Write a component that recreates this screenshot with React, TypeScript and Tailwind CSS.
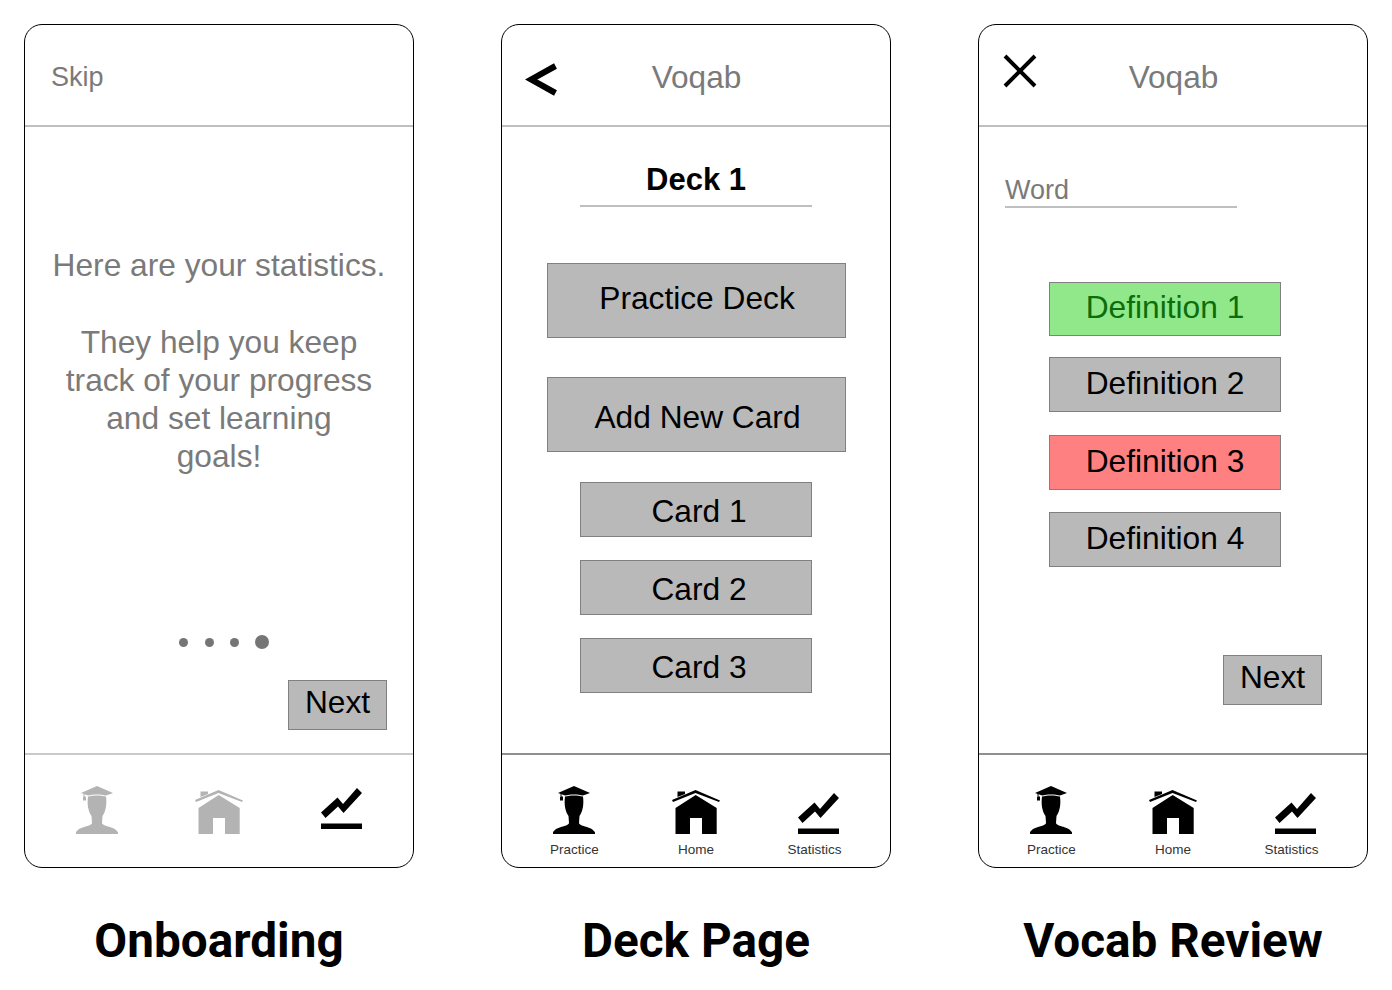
import React from 'react';

const PersonIcon: React.FC = () => (
  <svg width="42" height="48" viewBox="0 0 42 48" fill="currentColor">
    {/* cap */}
    <path d="M21 0 L37 7 L30 9.5 C25 8 17 8 12 9.5 L8.5 8.2 L5 7 Z" />
    <path d="M7.5 8 H8.5 V10.5 H10 V14.5 H7 V11 H7.5 Z" />
    {/* head and shoulders */}
    <path d="M12 10.5 C17 9 25 9 30 10.5 C31 18 30 25 26.5 30 L26 37 C27 41 39 40 42 46.5 L42 48 L0 48 L0 46.5 C3 40 15 41 16 37 L15.5 30 C12 25 11 18 12 10.5 Z" />
  </svg>
);

const HomeIcon: React.FC = () => (
  <svg width="48" height="44" viewBox="0 0 48 44" fill="currentColor">
    <path d="M0 10 L23.5 0 L48 10.5 L47 12 L23.5 3 L1 12 Z" />
    <path d="M5.5 1.5 H13 V4 L5.5 7 Z" />
    <path d="M3.5 18 L23.7 5 L44.7 18 V44 H30 V28 H18 V44 H3.5 Z" />
  </svg>
);

const StatsIcon: React.FC = () => (
  <svg width="41" height="41" viewBox="0 0 41 41" fill="currentColor">
    <path d="M0 24.5 L16.5 9.5 L22 16 L36 0 L41 5 L22.5 25 L17 18.5 L4.5 30 Z" />
    <rect x="0" y="35.5" width="41" height="5.5" />
  </svg>
);

interface BottomBarProps {
  muted?: boolean;
}

const BottomBar: React.FC<BottomBarProps> = ({ muted }) => (
  <div
    className={`h-[114px] border-t-2 grid grid-cols-3 px-[11px] ${
      muted ? 'border-[#c9c9c9]' : 'border-[#8f8f8f]'
    }`}
  >
    <div className={`flex flex-col items-center pt-[31px] ${muted ? 'text-[#b3b3b3]' : 'text-black'}`}>
      <PersonIcon />
      {!muted && <span className="mt-[7px] ml-[1px] text-[13.5px] leading-[17px] text-[#333333]">Practice</span>}
    </div>
    <div className={`flex flex-col items-center pt-[35px] ${muted ? 'text-[#b3b3b3]' : 'text-black'}`}>
      <HomeIcon />
      {!muted && <span className="mt-[7px] text-[13.5px] leading-[17px] text-[#333333]">Home</span>}
    </div>
    {muted ? (
      <div className="flex flex-col items-center pt-[33px] text-black">
        <StatsIcon />
      </div>
    ) : (
      <div className="flex flex-col items-center pt-[38px] text-black">
        <StatsIcon />
        <span className="mt-[7px] -ml-[7px] text-[13.5px] leading-[17px] text-[#333333]">Statistics</span>
      </div>
    )}
  </div>
);

interface ButtonBoxProps {
  label: string;
  className: string;
}

const ButtonBox: React.FC<ButtonBoxProps> = ({ label, className }) => (
  <div className={`flex items-center justify-center border border-[#808080] text-[31.7px] ${className}`}>
    {label}
  </div>
);

const Onboarding: React.FC = () => (
  <>
    <div className="h-[102px] border-b-2 border-[#bfbfbf] flex items-center pl-[26px] pt-[5px] text-[27px] text-[#7a7a7a]">
      Skip
    </div>
    <div className="flex-1 flex flex-col">
      <div className="mt-[119px] text-center text-[31.7px] leading-[38px] text-[#7a7a7a]">
        <p>Here are your statistics.</p>
        <p className="mt-[39px]">
          They help you keep
          <br />
          track of your progress
          <br />
          and set learning
          <br />
          goals!
        </p>
      </div>
      <div className="mt-[160px] ml-[154px] flex items-center">
        <span className="w-[9px] h-[9px] rounded-full bg-[#757575]" />
        <span className="ml-[17px] w-[9px] h-[9px] rounded-full bg-[#757575]" />
        <span className="ml-[16px] w-[9px] h-[9px] rounded-full bg-[#757575]" />
        <span className="ml-[16px] w-[14px] h-[14px] rounded-full bg-[#757575]" />
      </div>
      <ButtonBox label="Next" className="self-end mt-[31px] mr-[26px] w-[99px] h-[50px] pb-[4px] bg-[#b9b9b9]" />
    </div>
    <BottomBar muted />
  </>
);

const DeckPage: React.FC = () => (
  <>
    <div className="h-[102px] border-b-2 border-[#bfbfbf] grid grid-cols-[1fr_auto_1fr] items-center pt-[5px]">
      <svg className="ml-[23px] mt-[3px]" width="32" height="33" viewBox="0 0 32 33" fill="none" stroke="black" strokeWidth="6">
        <path d="M30.5 3 L6 16.5 L30.5 30" />
      </svg>
      <span className="ml-[1px] text-[31.6px] text-[#7a7a7a]">Voqab</span>
      <span />
    </div>
    <div className="flex-1 flex flex-col items-center">
      <div className="mt-[35px] w-[232px] h-[45px] border-b-2 border-[#bfbfbf] text-center font-bold text-[31px] leading-[36px] text-black">
        Deck 1
      </div>
      <ButtonBox label="Practice Deck" className="mt-[56px] w-[299px] h-[75px] pb-[4px] pl-[2px] bg-[#b9b9b9]" />
      <ButtonBox label="Add New Card" className="mt-[39px] w-[299px] h-[75px] pt-[6px] pl-[3px] bg-[#b9b9b9]" />
      <ButtonBox label="Card 1" className="mt-[30px] w-[232px] h-[55px] pt-[4px] pl-[6px] bg-[#b9b9b9]" />
      <ButtonBox label="Card 2" className="mt-[23px] w-[232px] h-[55px] pt-[4px] pl-[6px] bg-[#b9b9b9]" />
      <ButtonBox label="Card 3" className="mt-[23px] w-[232px] h-[55px] pt-[4px] pl-[6px] bg-[#b9b9b9]" />
    </div>
    <BottomBar />
  </>
);

const VocabReview: React.FC = () => (
  <>
    <div className="h-[102px] border-b-2 border-[#bfbfbf] grid grid-cols-[1fr_auto_1fr] items-center pt-[5px]">
      <svg className="ml-[24px] -mt-[13px]" width="34" height="34" viewBox="0 0 34 34" fill="none" stroke="black" strokeWidth="4">
        <path d="M2 2 L32 32 M32 2 L2 32" />
      </svg>
      <span className="ml-[1px] text-[31.6px] text-[#7a7a7a]">Voqab</span>
      <span />
    </div>
    <div className="flex-1 flex flex-col">
      <div className="mt-[45px] ml-[26px] w-[232px] h-[36px] border-b-2 border-[#bfbfbf] text-[27px] leading-[36px] text-[#7a7a7a]">
        Word
      </div>
      <ButtonBox label="Definition 1" className="mt-[74px] ml-[70px] w-[232px] h-[54px] pb-[2px] bg-[#90e88a] text-[#0b6e0b]" />
      <ButtonBox label="Definition 2" className="mt-[21px] ml-[70px] w-[232px] h-[55px] pb-[2px] bg-[#b9b9b9]" />
      <ButtonBox label="Definition 3" className="mt-[23px] ml-[70px] w-[232px] h-[55px] pb-[2px] bg-[#ff8080]" />
      <ButtonBox label="Definition 4" className="mt-[22px] ml-[70px] w-[232px] h-[55px] pb-[2px] bg-[#b9b9b9]" />
      <ButtonBox label="Next" className="self-end mt-[88px] mr-[45px] w-[99px] h-[50px] pb-[4px] bg-[#b9b9b9]" />
    </div>
    <BottomBar />
  </>
);

interface ScreenProps {
  title: string;
  children: React.ReactNode;
}

const Screen: React.FC<ScreenProps> = ({ title, children }) => (
  <div className="w-[390px] flex flex-col">
    <div className="h-[844px] border border-black rounded-[18px] overflow-hidden flex flex-col bg-white">
      {children}
    </div>
    <h2 className="mt-[46px] text-center text-[47.7px] leading-[54px] font-bold text-black font-['Roboto',sans-serif]">
      {title}
    </h2>
  </div>
);

const App: React.FC = () => {
  return (
    <div className="w-[1392px] h-[990px] overflow-hidden bg-white flex gap-[87px] pl-[24px] pt-[24px] font-['Liberation_Sans',Arial,sans-serif] text-black">
      <Screen title="Onboarding">
        <Onboarding />
      </Screen>
      <Screen title="Deck Page">
        <DeckPage />
      </Screen>
      <Screen title="Vocab Review">
        <VocabReview />
      </Screen>
    </div>
  );
};

export default App;
